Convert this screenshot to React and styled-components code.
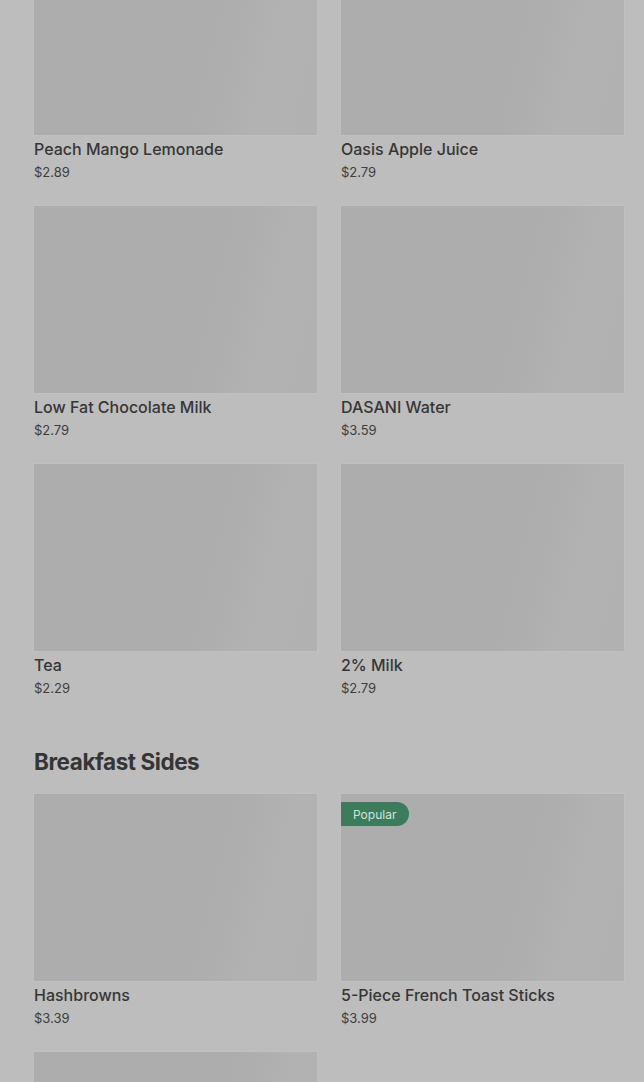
import React from "react";
import styled, { createGlobalStyle } from "styled-components";

const Global = createGlobalStyle`
  html, body { margin: 0; padding: 0; background: #bdbdbd; overflow: hidden; }
  body { font-family: Inter, "Noto Sans", sans-serif; color: #333; }
`;

const Page = styled.main`
  height: 1082px;
  overflow: hidden;
  padding: 0 20px 0 34px;
`;

const Scroller = styled.div`
  margin-top: -52px;
  display: flex;
  flex-direction: column;
`;

const Section = styled.section`
  display: flex;
  flex-direction: column;
  gap: 16px;
  & + & { margin-top: 48px; }
`;

const Heading = styled.h2`
  margin: 0;
  font-size: 22.5px;
  line-height: 32px;
  font-weight: 700;
  letter-spacing: -0.45px;
  color: #353535;
`;

const Grid = styled.div`
  display: grid;
  grid-template-columns: 283px 283px;
  column-gap: 24px;
  row-gap: 24px;
`;

const Card = styled.article`
  display: flex;
  flex-direction: column;
`;

const Thumb = styled.div`
  position: relative;
  height: 187px;
  margin-bottom: 2px;
  background: linear-gradient(104deg, #adadad 0%, #adadad 62%, #b2b2b2 80%, #b1b1b1 100%);
  box-shadow: 0 0 0 1px #c0c0c0;
`;

const Badge = styled.span`
  position: absolute;
  top: 8px;
  left: 0;
  height: 24px;
  padding: 0 13px 0 12px;
  display: flex;
  align-items: center;
  border-radius: 0 12px 12px 0;
  background: #3c7c5d;
  color: #d2e4d8;
  font-size: 12px;
  font-weight: 400;
`;

const Name = styled.div`
  font-size: 16px;
  line-height: 24px;
  font-weight: 500;
  color: #363636;
`;

const Price = styled.div`
  margin-top: 1px;
  font-size: 13px;
  line-height: 20px;
  color: #3e3e3e;
`;

const sections = [
  {
    title: null,
    items: [
      { name: "Peach Mango Lemonade", price: "$2.89" },
      { name: "Oasis Apple Juice", price: "$2.79" },
      { name: "Low Fat Chocolate Milk", price: "$2.79" },
      { name: "DASANI Water", price: "$3.59" },
      { name: "Tea", price: "$2.29" },
      { name: "2% Milk", price: "$2.79" },
    ],
  },
  {
    title: "Breakfast Sides",
    items: [
      { name: "Hashbrowns", price: "$3.39" },
      { name: "5-Piece French Toast Sticks", price: "$3.99", popular: true },
      { name: "Sausage Burrito", price: "$2.49" },
    ],
  },
];

export default function App() {
  return (
    <>
      <Global />
      <Page>
        <Scroller>
          {sections.map((s, i) => (
            <Section key={i}>
              {s.title && <Heading>{s.title}</Heading>}
              <Grid>
                {s.items.map((it) => (
                  <Card key={it.name}>
                    <Thumb>{it.popular && <Badge>Popular</Badge>}</Thumb>
                    <Name>{it.name}</Name>
                    <Price>{it.price}</Price>
                  </Card>
                ))}
              </Grid>
            </Section>
          ))}
        </Scroller>
      </Page>
    </>
  );
}
